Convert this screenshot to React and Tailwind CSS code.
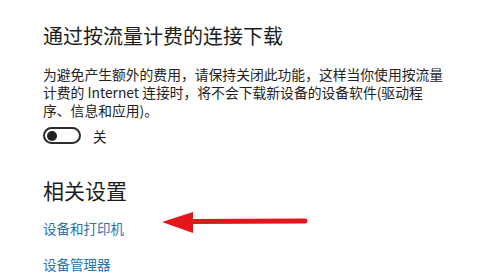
import React from "react";

export default function App() {
  return (
    <div
      className="relative w-[485px] h-[276px] overflow-hidden bg-white pl-[43px] text-[#1c1c1c]"
      style={{ fontFamily: '"Noto Sans CJK SC", "Noto Sans", sans-serif' }}
    >
      {/* 按流量计费 */}
      <h1 className="mt-[22px] text-[20px] leading-[28px] font-normal">
        通过按流量计费的连接下载
      </h1>
      <p className="mt-[15px] text-[13.8px] leading-[18px] text-[#222]">
        为避免产生额外的费用，请保持关闭此功能，这样当你使用按流量
        <br />
        计费的 Internet 连接时，将不会下载新设备的设备软件(驱动程
        <br />
        序、信息和应用)。
      </p>

      <div className="mt-[8px] flex h-[17px] items-center">
        <div className="flex h-[17px] w-[38px] items-center rounded-full border-2 border-[#2b2b2b] pl-[2px]">
          <div className="h-[10px] w-[10px] rounded-full bg-[#222]" />
        </div>
        <span className="ml-[12px] text-[13.5px] leading-[18px]">关</span>
      </div>

      {/* 相关设置 */}
      <h2 className="mt-[32px] text-[21px] leading-[28px] font-normal">
        相关设置
      </h2>
      <a className="mt-[15px] block text-[13.5px] leading-[18px] text-[#2a73ad]">
        设备和打印机
      </a>
      <a className="mt-[18px] block text-[13.5px] leading-[18px] text-[#2a73ad]">
        设备管理器
      </a>

      <svg
        className="absolute left-[160px] top-[208px]"
        width="150"
        height="28"
        viewBox="0 0 150 28"
      >
        <line
          x1="30"
          y1="13.5"
          x2="145"
          y2="13"
          stroke="#e3161b"
          strokeWidth="5"
          strokeLinecap="round"
        />
        <path d="M2 14 L33 4 L33 25 Z" fill="#e3161b" />
      </svg>
    </div>
  );
}
